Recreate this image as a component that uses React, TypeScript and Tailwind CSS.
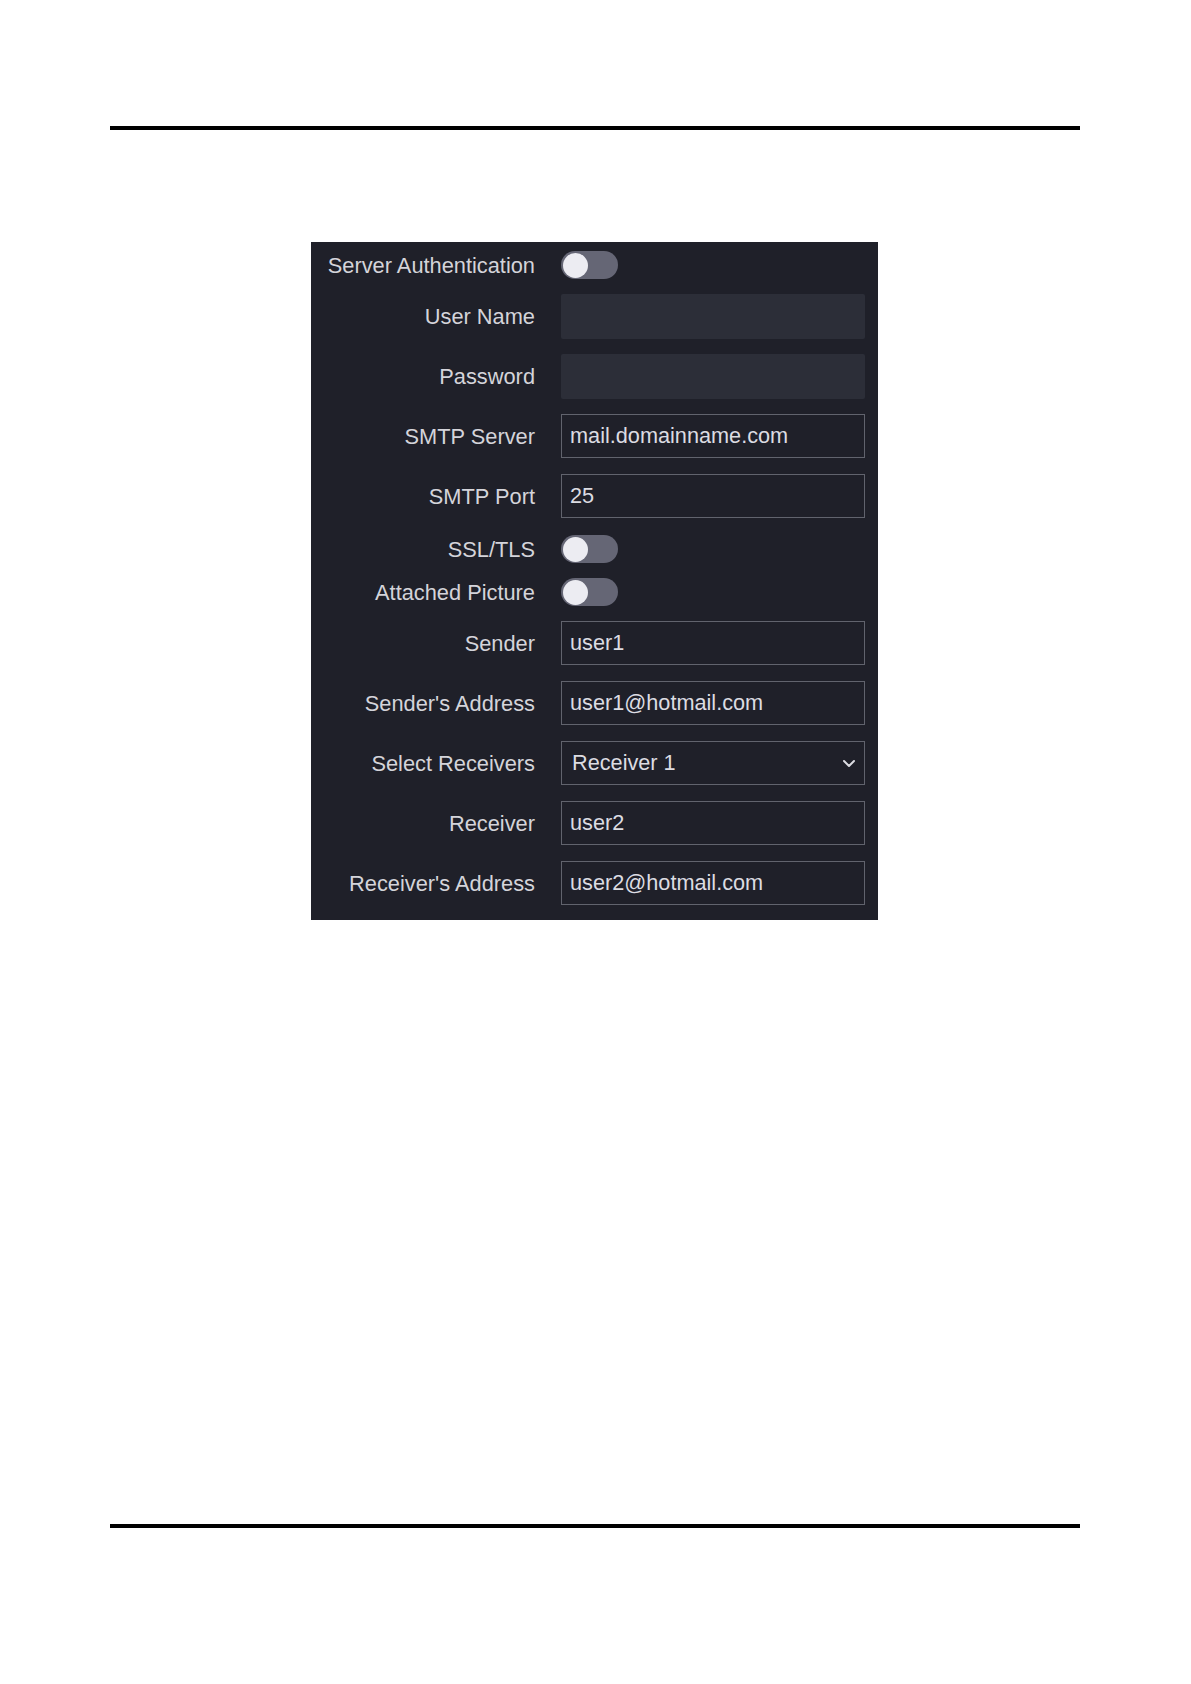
import type { ReactNode } from 'react';

interface RowProps {
  label: string;
  className?: string;
  children: ReactNode;
}

function Row({ label, className = '', children }: RowProps) {
  return (
    <div className={`flex items-center ${className}`}>
      <div className="w-[212px] shrink-0 pt-[1px] text-right text-[21.8px] leading-none text-[#d4d4da] whitespace-nowrap">
        {label}
      </div>
      <div className="ml-[26px] w-[304px] h-full flex items-center">{children}</div>
    </div>
  );
}

function Toggle() {
  return (
    <div className="w-[57px] h-[28px] rounded-full bg-[#656675] flex items-center px-[2px]">
      <div className="w-[25px] h-[25px] rounded-full bg-[#ececf2]" />
    </div>
  );
}

function TextBox({ value }: { value: string }) {
  return (
    <div className="w-full h-full border border-[#61636d] bg-[#1f2029] flex items-center pl-[8px] text-[21.7px] leading-none text-[#dcdce2]">
      {value}
    </div>
  );
}

function EmptyBox() {
  return <div className="w-full h-full rounded-[2px] bg-[#2c2e38]" />;
}

function SelectBox({ value }: { value: string }) {
  return (
    <div className="w-full h-full border border-[#61636d] bg-[#1f2029] flex items-center pl-[10px] pr-[8px] text-[21.7px] leading-none text-[#dcdce2]">
      <span className="flex-1">{value}</span>
      <svg width="14" height="9" viewBox="0 0 14 9" fill="none">
        <path d="M2 2l5 5 5-5" stroke="#dcdce2" strokeWidth="2" strokeLinecap="round" strokeLinejoin="round" />
      </svg>
    </div>
  );
}

export default function App() {
  return (
    <div className="w-[1191px] h-[1684px] bg-white flex flex-col" style={{ fontFamily: '"Liberation Sans", Arial, sans-serif' }}>
      <div className="mt-[126px] ml-[110px] w-[970px] h-[4px] bg-black" />

      <div className="mt-[112px] ml-[311px] w-[567px] h-[678px] bg-[#1f2029] flex flex-col pl-[12px] pt-[9px]">
        <Row label="Server Authentication" className="h-[28px]">
          <Toggle />
        </Row>
        <Row label="User Name" className="h-[45px] mt-[15px]">
          <EmptyBox />
        </Row>
        <Row label="Password" className="h-[45px] mt-[15px]">
          <EmptyBox />
        </Row>
        <Row label="SMTP Server" className="h-[44px] mt-[15px]">
          <TextBox value="mail.domainname.com" />
        </Row>
        <Row label="SMTP Port" className="h-[44px] mt-[16px]">
          <TextBox value="25" />
        </Row>
        <Row label="SSL/TLS" className="h-[28px] mt-[17px]">
          <Toggle />
        </Row>
        <Row label="Attached Picture" className="h-[28px] mt-[15px]">
          <Toggle />
        </Row>
        <Row label="Sender" className="h-[44px] mt-[15px]">
          <TextBox value="user1" />
        </Row>
        <Row label="Sender's Address" className="h-[44px] mt-[16px]">
          <TextBox value="user1@hotmail.com" />
        </Row>
        <Row label="Select Receivers" className="h-[44px] mt-[16px]">
          <SelectBox value="Receiver 1" />
        </Row>
        <Row label="Receiver" className="h-[44px] mt-[16px]">
          <TextBox value="user2" />
        </Row>
        <Row label="Receiver's Address" className="h-[44px] mt-[16px]">
          <TextBox value="user2@hotmail.com" />
        </Row>
      </div>

      <div className="mt-[604px] ml-[110px] w-[970px] h-[4px] bg-black" />
    </div>
  );
}
